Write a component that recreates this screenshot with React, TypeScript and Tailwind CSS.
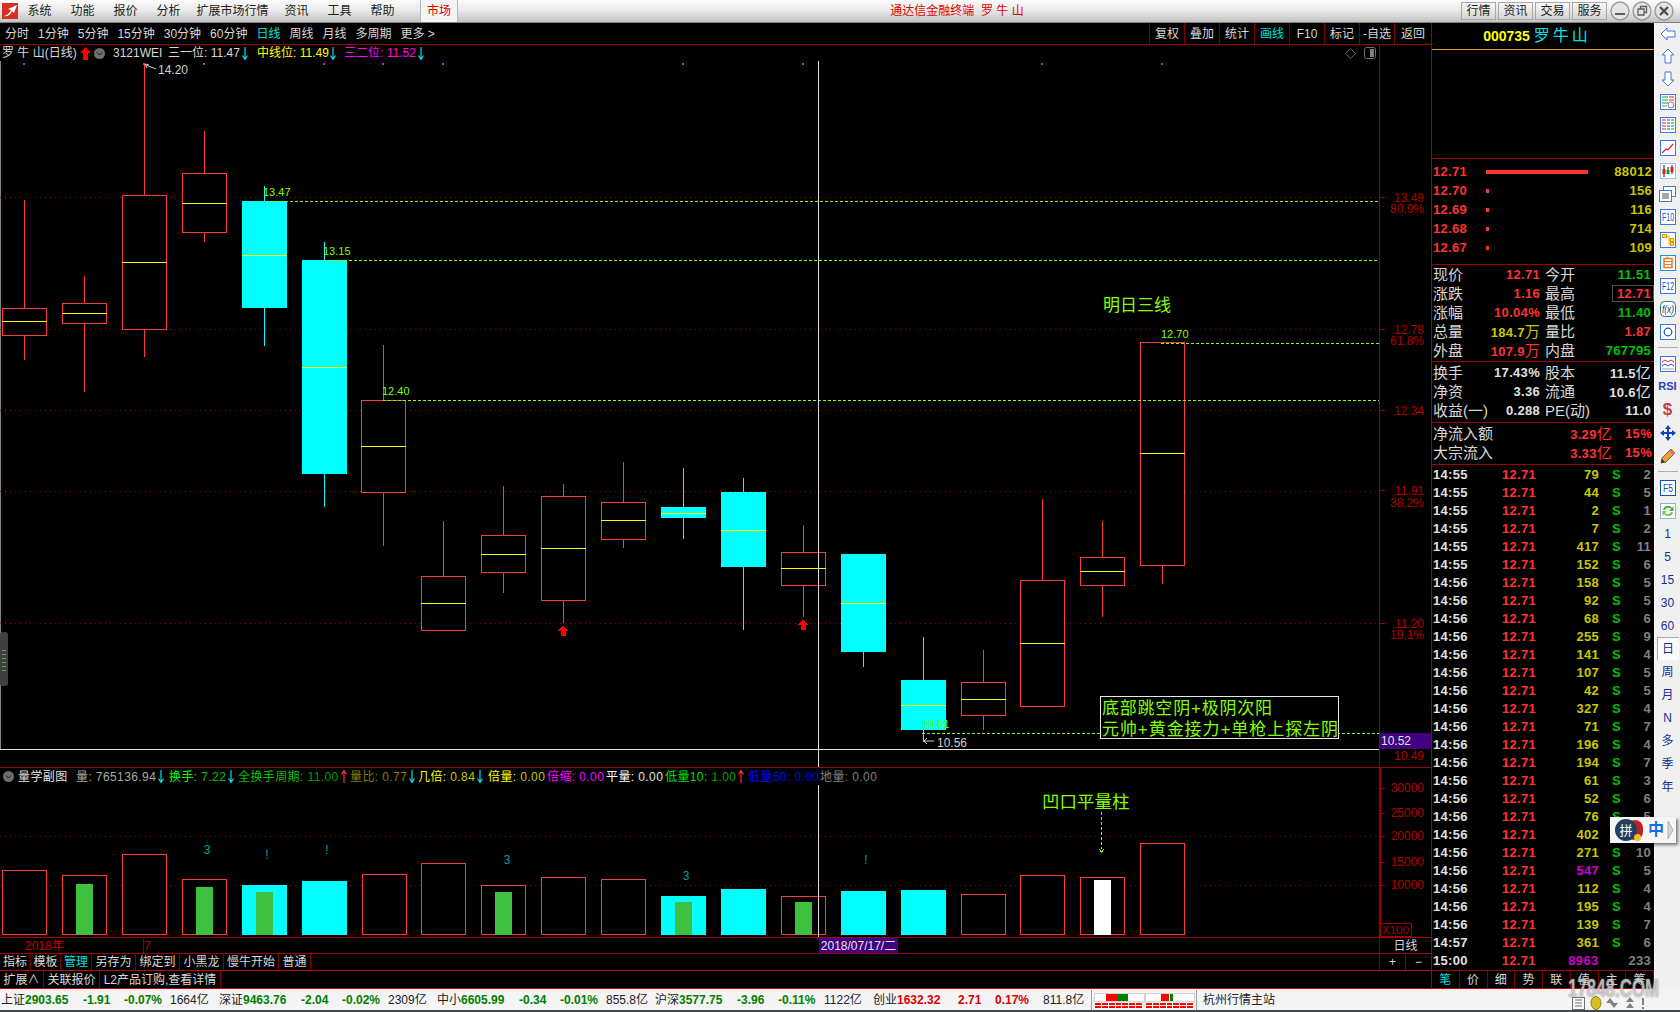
import type { ReactNode } from "react";

const RED = "#ff3c3c";
const LIME = "#80ff00";
const AXIS = "#b00000";

// x, top, bottom, mid, wickTop, wickBottom, cyan
const candles: [number, number, number, number, number, number, boolean][] = [
  [2, 308, 335, 321, 200, 360, false],
  [62, 303, 323, 313, 276, 392, false],
  [122, 195, 329, 262, 64, 357, false],
  [182, 173, 232, 203, 131, 242, false],
  [242, 201, 308, 255, 186, 346, true],
  [302, 260, 474, 367, 242, 507, true],
  [361, 400, 492, 446, 345, 546, false],
  [421, 576, 630, 603, 521, 630, false],
  [481, 535, 572, 554, 486, 593, false],
  [541, 496, 600, 548, 484, 623, false],
  [601, 502, 539, 520, 462, 548, false],
  [661, 507, 518, 513, 468, 539, true],
  [721, 492, 567, 530, 478, 630, true],
  [781, 552, 585, 568, 525, 617, false],
  [841, 554, 652, 603, 554, 667, true],
  [901, 680, 730, 705, 637, 742, true],
  [961, 682, 715, 699, 650, 730, false],
  [1020, 580, 706, 643, 499, 707, false],
  [1080, 557, 585, 571, 521, 617, false],
  [1140, 342, 565, 453, 342, 584, false],
];

// x, top, cyan, inner bar top, inner colour
const volumes: [number, number, boolean, number?, string?][] = [
  [2, 870, false],
  [62, 875, false, 884, "#40c040"],
  [122, 854, false],
  [182, 879, false, 887, "#40c040"],
  [242, 885, true, 892, "#40c040"],
  [302, 881, true],
  [362, 874, false],
  [421, 863, false],
  [481, 885, false, 892, "#40c040"],
  [541, 877, false],
  [601, 879, false],
  [661, 896, true, 902, "#40c040"],
  [721, 889, true],
  [781, 896, false, 902, "#40c040"],
  [841, 891, true],
  [901, 890, true],
  [961, 894, false],
  [1020, 875, false],
  [1080, 877, false, 880, "#ffffff"],
  [1140, 843, false],
];

const ticks: [string, number, number, boolean?][] = [
  ["14:55", 79, 2], ["14:55", 44, 5], ["14:55", 2, 1], ["14:55", 7, 2], ["14:55", 417, 11], ["14:55", 152, 6],
  ["14:56", 158, 5], ["14:56", 92, 5], ["14:56", 68, 6], ["14:56", 255, 9], ["14:56", 141, 4], ["14:56", 107, 5],
  ["14:56", 42, 5], ["14:56", 327, 4], ["14:56", 71, 7], ["14:56", 196, 4], ["14:56", 194, 7], ["14:56", 61, 3],
  ["14:56", 52, 6], ["14:56", 76, 5], ["14:56", 402, 4], ["14:56", 271, 10], ["14:56", 547, 5, true], ["14:56", 112, 4],
  ["14:56", 195, 4], ["14:56", 139, 7], ["14:57", 361, 6], ["15:00", 8963, 233, true],
];

const book: [string, string, number][] = [
  ["12.71", "88012", 102], ["12.70", "156", 3], ["12.69", "116", 3], ["12.68", "714", 3], ["12.67", "109", 3],
];

function Arrow({ className, up }: { className: string; up?: boolean }) {
  return (
    <svg width="6" height="13" viewBox="0 0 6 13" className={`shrink-0 ${className} ${up ? "rotate-180" : ""}`}>
      <path d="M3 0V12M0.5 8.5L3 12.5L5.5 8.5" fill="none" stroke="currentColor" strokeWidth="1.2" />
    </svg>
  );
}

function Frame({ children, stroke = "#3b7be0" }: { children: ReactNode; stroke?: string }) {
  return (
    <svg width="16" height="16" viewBox="0 0 16 16">
      <rect x="0.5" y="0.5" width="15" height="15" fill="#ffffff" stroke={stroke} />
      {children}
    </svg>
  );
}

function Label({ text, color = "#1050b0", length = 12 }: { text: string; color?: string; length?: number }) {
  return (
    <text x={8 - length / 2} y="12" fontSize="10.5" fill={color} textLength={length} lengthAdjust="spacingAndGlyphs">
      {text}
    </text>
  );
}

const stripIcons: ReactNode[] = [
  <svg width="16" height="14" viewBox="0 0 16 14"><path d="M1 7L7 1V4H15V10H7V13Z" fill="#fff" stroke="#3b7be0" /></svg>,
  <svg width="14" height="16" viewBox="0 0 14 16"><path d="M7 1L13 7H10V15H4V7H1Z" fill="#fff" stroke="#3b7be0" /></svg>,
  <svg width="14" height="16" viewBox="0 0 14 16"><path d="M7 15L13 9H10V1H4V9H1Z" fill="#fff" stroke="#3b7be0" /></svg>,
  <Frame><path d="M2 3H8M2 6H8M2 9H8" stroke="#00a040" /><path d="M9 3H14M9 6H14" stroke="#e02020" /><circle cx="11" cy="11" r="3" fill="none" stroke="#808080" /><path d="M2 12H7" stroke="#808080" /></Frame>,
  <Frame><path d="M2 3H6M2 6H6M2 9H6M2 12H6" stroke="#e02020" /><path d="M7 3H10M7 6H10M7 9H10M7 12H10" stroke="#2040d0" /><path d="M11 3H14M11 6H14M11 9H14M11 12H14" stroke="#00a040" /></Frame>,
  <Frame><path d="M2 13L6 9L8 10L13 4" fill="none" stroke="#e02020" strokeWidth="1.2" /></Frame>,
  <Frame stroke="#a0c0f0"><path d="M4 2V14M8 4V11M12 2V11" stroke="#101010" /><rect x="2.5" y="6" width="3" height="5" fill="#e02020" /><rect x="6.5" y="7" width="3" height="4" fill="#00a040" /><rect x="10.5" y="4" width="3" height="5" fill="#e02020" /></Frame>,
  <svg width="17" height="16" viewBox="0 0 17 16"><rect x="4.5" y="0.5" width="12" height="10" fill="#fff" stroke="#3b7be0" /><rect x="0.5" y="4.5" width="12" height="11" fill="#fff" stroke="#3b7be0" /><path d="M3 8H10M3 10H10M3 12H10" stroke="#505050" /></svg>,
  <Frame><Label text="F10" /></Frame>,
  <Frame><path d="M6 4H9V12H11M9 8H11" fill="none" stroke="#e0a000" /><rect x="2.5" y="2.5" width="4" height="3" fill="#ffe060" stroke="#e0a000" /><rect x="10.5" y="6.5" width="3" height="3" fill="#ffe060" stroke="#e0a000" /><rect x="10.5" y="10.5" width="3" height="3" fill="#ffe060" stroke="#e0a000" /></Frame>,
  <Frame stroke="#2090e0"><rect x="4" y="3.5" width="8" height="9" fill="none" stroke="#f07820" strokeWidth="1.5" /><path d="M4 6.5H12M4 9.5H12M7 1.5L8 3.5" stroke="#f07820" strokeWidth="1.2" /></Frame>,
  <Frame><Label text="F12" /></Frame>,
  <svg width="16" height="16" viewBox="0 0 16 16"><rect x="0.5" y="0.5" width="15" height="15" rx="4" fill="#fff" stroke="#208080" /><text x="2" y="12" fontSize="10" fontStyle="italic" fill="#104080" textLength="12" lengthAdjust="spacingAndGlyphs">f(x)</text></svg>,
  <Frame><circle cx="8" cy="8" r="3.8" fill="none" stroke="#1050b0" strokeWidth="1.2" /></Frame>,
  null,
  <Frame><path d="M2 6L5 4L8 6L11 4L14 6" fill="none" stroke="#e02020" /><path d="M2 10L5 8L8 10L11 8L14 10" fill="none" stroke="#2040d0" /><path d="M2 13H14" stroke="#a0a0a0" /></Frame>,
  <span className="text-[11px] leading-none font-bold text-[#2840b8]">RSI</span>,
  <span className="text-[17px] leading-none font-bold text-[#c84040]">$</span>,
  <svg width="16" height="16" viewBox="0 0 16 16"><path d="M8 0L11 4H9V7H12V5L16 8L12 11V9H9V12H11L8 16L5 12H7V9H4V11L0 8L4 5V7H7V4H5Z" fill="#1040c0" /></svg>,
  <svg width="16" height="16" viewBox="0 0 16 16"><path d="M1 15L2 10L11 1L15 5L6 14Z" fill="#e8a040" stroke="#806030" /><path d="M11 1L15 5L13 7L9 3Z" fill="#e07070" /><path d="M1 15L2 11L5 14Z" fill="#303030" /></svg>,
  null,
  <Frame stroke="#1050c0"><Label text="F5" length={10} /></Frame>,
  <Frame stroke="#90b0e0"><path d="M3 7A5 5 0 0 1 12 5L13.5 3V8H9L11 6A3.5 3.5 0 0 0 5 7Z" fill="#40b040" /><path d="M13 9A5 5 0 0 1 4 11L2.5 13V8H7L5 10A3.5 3.5 0 0 0 11 9Z" fill="#70c840" /></Frame>,
];

const stripText = ["1", "5", "15", "30", "60", "日", "周", "月", "N", "多", "季", "年"];

function Strip() {
  return (
    <div className="w-[26px] flex flex-col items-center bg-[#f0f0f0] border-l border-[#fafafa]">
      {stripIcons.map((icon, i) =>
        icon === null ? (
          <div key={i} className="w-[20px] h-[9px] flex items-center shrink-0">
            <div className="w-full h-px bg-[#b0b0b0]" />
          </div>
        ) : (
          <div key={i} className={`w-full flex items-center justify-center shrink-0 ${i === 0 ? "h-[21px]" : "h-[23px]"}`}>
            {icon}
          </div>
        ),
      )}
      {stripText.map((t) => (
        <div
          key={t}
          className={`w-[22px] h-[23px] shrink-0 flex items-center justify-center text-[12px] text-[#103090] ${t === "日" ? "bg-[#fafafa] border-t border-l border-[#a8a8a8]" : ""}`}
        >
          {t}
        </div>
      ))}
    </div>
  );
}

function TitleBar() {
  const menu: [string, string][] = [
    ["系统", "w-[43px]"], ["功能", "w-[43px]"], ["报价", "w-[43px]"], ["分析", "w-[43px]"],
    ["扩展市场行情", "w-[85px]"], ["资讯", "w-[43px]"], ["工具", "w-[43px]"], ["帮助", "w-[43px]"],
  ];
  return (
    <div className="h-[23px] shrink-0 flex items-center bg-linear-to-b from-[#fcfcfc] via-[#e8e8e8] to-[#c2c2c2] border-b border-[#808080] text-[12px] text-[#222222]">
      <svg width="16" height="16" viewBox="0 0 16 16" className="ml-[2px] shrink-0">
        <rect width="16" height="16" fill="#d83020" />
        <path d="M2 13C6 12 8 9 9 7L6 6L15 2L12 10L10 8C9 11 6 14 2 13Z" fill="#ffffff" />
      </svg>
      {menu.map(([t, w]) => (
        <div key={t} className={`${w} text-center`}>{t}</div>
      ))}
      <div className="ml-[16px] w-[38px] h-full flex items-center justify-center border-x border-[#b8b8b8] bg-[#f4f4f4] text-[#e00000]">市场</div>
      <div className="flex-1 pr-[5px] text-center text-[#e00000]">通达信金融终端&nbsp; 罗 牛 山</div>
      <div className="flex gap-[2px]">
        {["行情", "资讯", "交易", "服务"].map((t) => (
          <div key={t} className="w-[35px] h-[18px] flex items-center justify-center border border-[#a8a8a8] bg-linear-to-b from-[#f8f8f8] to-[#d4d4d4]">{t}</div>
        ))}
      </div>
      <div className="ml-[3px] mr-[6px] flex gap-[2px]">
        {[
          <path d="M5 13H15" stroke="#606060" strokeWidth="2" />,
          <path d="M6 8H12V14H6ZM8.5 8V5.5H14.5V11.5H12" fill="none" stroke="#606060" strokeWidth="1.3" />,
          <path d="M6 6L14 14M14 6L6 14" stroke="#505050" strokeWidth="2.4" />,
        ].map((glyph, i) => (
          <svg key={i} width="20" height="20" viewBox="0 0 20 20">
            <circle cx="10" cy="10" r="9" fill="#e4e4e4" stroke="#989898" strokeWidth="1.4" />
            {glyph}
          </svg>
        ))}
      </div>
    </div>
  );
}

function Toolbar() {
  const left = ["分时", "1分钟", "5分钟", "15分钟", "30分钟", "60分钟", "日线", "周线", "月线", "多周期", "更多 >"];
  const right = ["复权", "叠加", "统计", "画线", "F10", "标记", "-自选", "返回"];
  return (
    <div className="h-[22px] shrink-0 flex items-center border-b border-[#a00000] text-[12px] text-[#d8d8d8]">
      <div className="flex gap-[9px] pl-[5px]">
        {left.map((t) => (
          <span key={t} className={t === "日线" ? "text-[#00e0e0]" : ""}>{t}</span>
        ))}
      </div>
      <div className="ml-auto flex h-full">
        {right.map((t, i) => (
          <div key={t} className={`${i === 7 ? "w-[37px]" : "w-[35px]"} flex items-center justify-center border-l border-[#800000] ${t === "画线" ? "text-[#00e0e0]" : ""}`}>
            {t}
          </div>
        ))}
      </div>
    </div>
  );
}

function InfoRow() {
  return (
    <div className="h-[16px] shrink-0 flex items-center text-[12px] leading-none text-[#d8d8d8]">
      <span className="w-[80px] pl-[2px] shrink-0">罗 牛 山(日线)</span>
      <svg width="11" height="13" viewBox="0 0 11 13" className="shrink-0"><path d="M5.5 0L11 6H8V13H3V6H0Z" fill="#ff0000" /></svg>
      <svg width="11" height="11" viewBox="0 0 11 11" className="ml-[3px] shrink-0"><circle cx="5.5" cy="5.5" r="5.5" fill="#707070" /><path d="M3 4.5L5.5 7L8 4.5" fill="none" stroke="#101010" /></svg>
      <span className="w-[55px] ml-[8px] shrink-0">3121WEI</span>
      <span className="w-[74px] shrink-0">三一位: 11.47</span>
      <Arrow className="text-[#00e0e0]" />
      <span className="w-[73px] ml-[9px] shrink-0 text-[#ffff00]">中线位: 11.49</span>
      <Arrow className="text-[#00e0e0]" />
      <span className="w-[74px] ml-[8px] shrink-0 text-[#ff00ff]">三二位: 11.52</span>
      <Arrow className="text-[#00e0e0]" />
      <div className="flex-1" />
      <svg width="11" height="11" viewBox="0 0 11 11" className="mr-[8px]"><path d="M5.5 0.5L10.5 5.5L5.5 10.5L0.5 5.5Z" fill="none" stroke="#606060" /></svg>
      <svg width="12" height="12" viewBox="0 0 12 12" className="mr-[3px]"><rect x="0.5" y="0.5" width="11" height="11" rx="2" fill="none" stroke="#707070" /><rect x="6" y="2" width="4" height="8" fill="#808080" /></svg>
      <div className="w-[52px] h-full border-l border-[#900000]" />
    </div>
  );
}

function Mark({ x, y, children, color = LIME, size = 11 }: { x: number; y: number; children: ReactNode; color?: string; size?: number }) {
  return (
    <text x={x} y={y} fontSize={size} fill={color} dominantBaseline="central">
      {children}
    </text>
  );
}

function PriceChart() {
  const levels = [197, 329.5, 410, 491, 623];
  const dashes: [number, number][] = [[270, 201], [324, 260], [383, 400], [1161, 343], [922, 733]];
  const axis: [string, number][] = [
    ["13.49", 198], ["80.9%", 209], ["12.78", 330], ["61.8%", 341], ["12.34", 411],
    ["11.91", 491], ["38.2%", 503], ["11.20", 624], ["19.1%", 635], ["10.49", 756],
  ];
  const dots = [24, 144, 204, 324, 383, 443, 683, 803, 1042, 1162];
  return (
    <svg width="1431" height="706" viewBox="0 61 1431 706" className="block shrink-0" shapeRendering="crispEdges">
      <line x1="0.5" y1="61" x2="0.5" y2="750" stroke="#808080" />
      {levels.map((y) => (
        <line key={y} x1="0" y1={Math.floor(y) + 0.5} x2="1379" y2={Math.floor(y) + 0.5} stroke="#a00000" strokeDasharray="1 4" />
      ))}
      {dots.map((x) => (
        <rect key={x} x={x - 1} y={63} width="2" height="2" fill="#ff00ff" />
      ))}
      {candles.map(([x, top, bottom, mid, wt, wb, cyan]) => (
        <g key={x}>
          <line x1={x + 22.5} y1={wt} x2={x + 22.5} y2={wb} stroke={cyan ? "#00ffff" : RED} />
          {cyan ? (
            <rect x={x} y={top} width="45" height={bottom - top} fill="#00ffff" />
          ) : (
            <rect x={x + 0.5} y={top + 0.5} width="44" height={bottom - top} fill="#000000" stroke={RED} />
          )}
          <line x1={x} y1={mid + 0.5} x2={x + 45} y2={mid + 0.5} stroke="#ffff00" />
        </g>
      ))}
      {dashes.map(([x, y]) => (
        <line key={y} x1={x} y1={y + 0.5} x2="1379" y2={y + 0.5} stroke={LIME} strokeDasharray="3 2" />
      ))}
      <path d="M563 625L568 631H565.5V636H560.5V631H558Z" fill="#ff0000" />
      <path d="M803 619L808 625H805.5V630H800.5V625H798Z" fill="#ff0000" />
      <line x1="818.5" y1="61" x2="818.5" y2="767" stroke="#e0e0e0" />
      <line x1="0" y1="749.5" x2="1379" y2="749.5" stroke="#e0e0e0" />
      <line x1="1379.5" y1="61" x2="1379.5" y2="767" stroke="#900000" />
      {[198, 330, 411, 491, 624].map((y) => (
        <line key={y} x1="1380" y1={y - 0.5} x2="1385" y2={y - 0.5} stroke="#a00000" />
      ))}
      <g shapeRendering="auto">
        {axis.map(([t, y]) => (
          <text key={t} x="1424" y={y} textAnchor="end" fontSize="12" fill={AXIS} dominantBaseline="central">{t}</text>
        ))}
        <path d="M145 64L149 65M145 64L147 68M146 65L156 69" fill="none" stroke="#d0d0d0" />
        <Mark x={158} y={70} color="#d0d0d0" size={12}>14.20</Mark>
        <Mark x={263} y={192}>13.47</Mark>
        <Mark x={323} y={251}>13.15</Mark>
        <Mark x={382} y={391}>12.40</Mark>
        <Mark x={1161} y={334}>12.70</Mark>
        <Mark x={1103} y={305} size={17}>明日三线</Mark>
        <Mark x={922} y={724}>10.61</Mark>
        <path d="M934 741H924M927 738L924 741L927 744" fill="none" stroke="#d0d0d0" />
        <Mark x={937} y={743} color="#d0d0d0" size={12}>10.56</Mark>
      </g>
      <rect x="1100.5" y="696.5" width="238" height="42" fill="#000000" stroke="#e8e8e8" />
      <g shapeRendering="auto">
        <text x="1102" y="708" fontSize="17" fill={LIME} dominantBaseline="central" textLength={170}>底部跳空阴+极阴次阳</text>
        <text x="1102" y="729" fontSize="17" fill={LIME} dominantBaseline="central" textLength={236}>元帅+黄金接力+单枪上探左阴</text>
      </g>
      <rect x="1380" y="733" width="51" height="16" fill="#400080" />
      <g shapeRendering="auto">
        <text x="1381" y="741" fontSize="12" fill="#e0e0e0" dominantBaseline="central">10.52</text>
        <rect x="0" y="632" width="8" height="54" rx="3" fill="#404040" />
      </g>
      <path d="M2 650H6M2 654H6M2 658H6M2 662H6M2 666H6M2 670H6" stroke="#60a060" />
    </svg>
  );
}

const volHeader: { label: string; value?: string; lc: string; vc?: string; w: string; arrow?: string; up?: boolean }[] = [
  { label: "量学副图", lc: "text-[#e0e0e0]", w: "w-[58px]" },
  { label: "量:", value: " 765136.94", lc: "text-[#a8a8a8]", vc: "text-[#a8a8a8]", w: "w-[93px]", arrow: "text-[#00e0e0]" },
  { label: "换手:", value: " 7.22", lc: "text-[#00ff00]", vc: "text-[#00c000]", w: "w-[69px]", arrow: "text-[#00e0e0]" },
  { label: "全换手周期:", value: " 11.00", lc: "text-[#00c000]", vc: "text-[#00a000]", w: "w-[112px]", arrow: "text-[#ff3030]", up: true },
  { label: "量比:", value: " 0.77", lc: "text-[#808000]", vc: "text-[#808000]", w: "w-[68px]", arrow: "text-[#00e0e0]" },
  { label: "几倍:", value: " 0.84", lc: "text-[#ffff00]", vc: "text-[#c8c800]", w: "w-[70px]", arrow: "text-[#00e0e0]" },
  { label: "倍量:", value: " 0.00", lc: "text-[#ffff00]", vc: "text-[#c8c800]", w: "w-[59px]" },
  { label: "倍缩:", value: " 0.00", lc: "text-[#ff00ff]", vc: "text-[#ff00ff]", w: "w-[59px]" },
  { label: "平量:", value: " 0.00", lc: "text-[#ffffff]", vc: "text-[#e0e0e0]", w: "w-[59px]" },
  { label: "低量10:", value: " 1.00", lc: "text-[#00e000]", vc: "text-[#00a000]", w: "w-[83px]", arrow: "text-[#ff3030]", up: true },
  { label: "低量50:", value: " 0.00", lc: "text-[#0000ff]", vc: "text-[#0000e0]", w: "w-[72px]" },
  { label: "地量:", value: " 0.00", lc: "text-[#808080]", vc: "text-[#808080]", w: "w-[60px]" },
];

function VolumeHeader() {
  return (
    <div className="h-[18px] shrink-0 flex items-center border-t border-[#a00000] text-[12px] leading-none whitespace-pre tracking-[0.4px]">
      <svg width="11" height="11" viewBox="0 0 11 11" className="ml-[3px] mr-[4px] shrink-0"><circle cx="5.5" cy="5.5" r="5.5" fill="#707070" /><path d="M3 4.5L5.5 7L8 4.5" fill="none" stroke="#101010" /></svg>
      {volHeader.map((item) => (
        <div key={item.label} className={`${item.w} shrink-0 flex items-center gap-[2px]`}>
          <span className={item.lc}>{item.label}</span>
          {item.value && <span className={`${item.vc} -ml-[2px]`}>{item.value}</span>}
          {item.arrow && <Arrow className={item.arrow} up={item.up} />}
        </div>
      ))}
      <div className="flex-1" />
      <div className="w-[52px] h-full border-l-2 border-[#a00000]" />
    </div>
  );
}

function VolumeChart() {
  const marks: [string, number, number][] = [["3", 207, 850], ["!", 267, 855], ["!", 327, 850], ["3", 507, 860], ["3", 686, 876], ["!", 866, 860]];
  const axis: [string, number][] = [["30000", 788], ["25000", 813], ["20000", 836], ["15000", 862], ["10000", 885]];
  return (
    <svg width="1431" height="152" viewBox="0 785 1431 152" className="block shrink-0 overflow-visible" shapeRendering="crispEdges">
      {[836, 885].map((y) => (
        <line key={y} x1="0" y1={y + 0.5} x2="1379" y2={y + 0.5} stroke="#a00000" strokeDasharray="1 4" />
      ))}
      {volumes.map(([x, top, cyan, innerTop, innerColor]) => (
        <g key={x}>
          {cyan ? (
            <rect x={x} y={top} width="45" height={935 - top} fill="#00ffff" />
          ) : (
            <rect x={x + 0.5} y={top + 0.5} width="44" height={934 - top} fill="#000000" stroke={RED} />
          )}
          {innerTop && <rect x={x + 14} y={innerTop} width="17" height={935 - innerTop} fill={innerColor} />}
        </g>
      ))}
      <line x1="818.5" y1="785" x2="818.5" y2="937" stroke="#e0e0e0" />
      <line x1="1101.5" y1="812" x2="1101.5" y2="849" stroke={LIME} strokeDasharray="3 2" />
      <path d="M1099 849L1101.5 852L1104 849" fill="none" stroke={LIME} />
      <line x1="1380" y1="785" x2="1380" y2="937" stroke="#a00000" strokeWidth="2" />
      {axis.map(([t, y]) => (
        <line key={t} x1="1381" y1={y + 0.5} x2="1385" y2={y + 0.5} stroke="#a00000" />
      ))}
      <rect x="1380.5" y="923.5" width="31" height="13" fill="none" stroke="#a00000" />
      <g shapeRendering="auto">
        {marks.map(([t, x, y]) => (
          <text key={x} x={x} y={y} textAnchor="middle" fontSize="12" fill="#00a0a0" dominantBaseline="central">{t}</text>
        ))}
        {axis.map(([t, y]) => (
          <text key={t} x="1424" y={y} textAnchor="end" fontSize="12" fill={AXIS} dominantBaseline="central">{t}</text>
        ))}
        <text x="1382" y="930" fontSize="11.5" fill={AXIS} dominantBaseline="central">X100</text>
        <text x="1042" y="802" fontSize="17.5" fill={LIME} dominantBaseline="central">凹口平量柱</text>
      </g>
    </svg>
  );
}

function LeftColumn() {
  const tabs: [string, string][] = [
    ["指标", "w-[31px]"], ["模板", "w-[30px]"], ["管理", "w-[31px]"], ["另存为", "w-[44px]"],
    ["绑定到", "w-[44px]"], ["小黑龙", "w-[44px]"], ["慢牛开始", "w-[55px]"], ["普通", "w-[32px]"],
  ];
  const links: [string, string][] = [["扩展∧", "w-[44px]"], ["关联报价", "w-[56px]"], ["L2产品订购,查看详情", "w-[121px]"]];
  return (
    <div className="w-[1432px] shrink-0 flex flex-col border-r border-[#a00000]">
      <Toolbar />
      <InfoRow />
      <PriceChart />
      <VolumeHeader />
      <VolumeChart />
      <div className="h-[16px] shrink-0 flex items-stretch border-t border-[#a00000] text-[12px] leading-none">
        <div className="w-[144px] pl-[25px] flex items-center border-r border-[#800000] text-[#c00000]">2018年</div>
        <div className="w-[675px] flex items-center text-[#c00000]">7</div>
        <div className="w-[79px] flex items-center justify-center bg-[#400080] text-[#e8e8e8]">2018/07/17/二</div>
        <div className="flex-1" />
        <div className="w-[52px] flex items-center justify-center border-l border-[#800000] text-[#d8d8d8]">日线</div>
      </div>
      <div className="h-[17px] shrink-0 flex items-stretch border-t border-[#a00000] text-[12px] leading-none text-[#d8d8d8]">
        {tabs.map(([t, w]) => (
          <div key={t} className={`${w} flex items-center justify-center border-r border-[#800000] ${t === "管理" ? "text-[#00e0e0]" : ""}`}>{t}</div>
        ))}
        <div className="flex-1" />
        <div className="w-[26px] flex items-center justify-center border-l border-[#800000]">+</div>
        <div className="w-[26px] flex items-center justify-center border-l border-[#800000]">−</div>
      </div>
      <div className="h-[19px] shrink-0 flex items-stretch border-y border-[#c80000] text-[12px] leading-none text-[#d8d8d8]">
        {links.map(([t, w]) => (
          <div key={t} className={`${w} flex items-center justify-center border-r border-[#800000]`}>{t}</div>
        ))}
      </div>
    </div>
  );
}

const num = "font-bold text-[13px] tracking-[0.3px]";

function StatValue({ v, unit, className }: { v: string; unit?: string; className: string }) {
  return (
    <span className={`${num} ${className}`}>
      {v}
      {unit && <span className="font-normal text-[15px]">{unit}</span>}
    </span>
  );
}

function StatRow({ l1, v1, l2, v2 }: { l1: string; v1: ReactNode; l2: string; v2: ReactNode }) {
  return (
    <div className="h-[19px] flex items-center pl-px pr-[3px] text-[15px] leading-none text-[#d8d8d8]">
      <div className="w-[107px] flex items-center justify-between">
        <span>{l1}</span>
        {v1}
      </div>
      <div className="flex-1 ml-[5px] flex items-center justify-between">
        <span>{l2}</span>
        {v2}
      </div>
    </div>
  );
}

function RightPanel() {
  const R = "text-[#ff3232]";
  const G = "text-[#00c000]";
  const W = "text-[#e0e0e0]";
  const Y = "text-[#c8c800]";
  return (
    <div className="w-[222px] shrink-0 flex flex-col">
      <div className="h-[27px] shrink-0 flex items-center justify-center gap-[4px] pr-[12px] border-b border-[#e0a030] leading-none">
        <span className="font-bold text-[14px] text-[#ffff00]">000735</span>
        <span className="text-[16px] text-[#00e0e0] tracking-[3px]">罗牛山</span>
      </div>
      <div className="h-[109px] shrink-0 border-b border-[#a00000]" />
      <div className="h-[106px] shrink-0 pt-[3px] border-b border-[#a00000]">
        {book.map(([p, v, w]) => (
          <div key={p} className={`h-[19px] flex items-center pl-px pr-[2px] leading-none ${num}`}>
            <span className={`w-[53px] ${R}`}>{p}</span>
            <div className="flex-1">
              <div className="h-[4px] bg-[#ff3232]" style={{ width: w }} />
            </div>
            <span className={Y}>{v}</span>
          </div>
        ))}
      </div>
      <div className="h-[97px] shrink-0 border-b border-[#a00000]">
        <StatRow l1="现价" v1={<StatValue v="12.71" className={R} />} l2="今开" v2={<StatValue v="11.51" className={G} />} />
        <StatRow l1="涨跌" v1={<StatValue v="1.16" className={R} />} l2="最高" v2={<span className={`${num} ${R} border border-[#505050] -mr-[3px] pl-[4px] pr-[2px] py-px`}>12.71</span>} />
        <StatRow l1="涨幅" v1={<StatValue v="10.04%" className={R} />} l2="最低" v2={<StatValue v="11.40" className={G} />} />
        <StatRow l1="总量" v1={<StatValue v="184.7" unit="万" className={Y} />} l2="量比" v2={<StatValue v="1.87" className={R} />} />
        <StatRow l1="外盘" v1={<StatValue v="107.9" unit="万" className={R} />} l2="内盘" v2={<StatValue v="767795" className={G} />} />
      </div>
      <div className="h-[61px] shrink-0 pt-px border-b border-[#a00000]">
        <StatRow l1="换手" v1={<StatValue v="17.43%" className={W} />} l2="股本" v2={<StatValue v="11.5" unit="亿" className={W} />} />
        <StatRow l1="净资" v1={<StatValue v="3.36" className={W} />} l2="流通" v2={<StatValue v="10.6" unit="亿" className={W} />} />
        <StatRow l1="收益(一)" v1={<StatValue v="0.288" className={W} />} l2="PE(动)" v2={<StatValue v="11.0" className={W} />} />
      </div>
      <div className="h-[42px] shrink-0 pt-px border-b border-[#a00000]">
        {[["净流入额", "3.29"], ["大宗流入", "3.33"]].map(([l, v]) => (
          <div key={l} className="h-[19px] flex items-center pl-px pr-[2px] text-[15px] leading-none text-[#d8d8d8]">
            <span className="flex-1">{l}</span>
            <StatValue v={v} unit="亿" className={R} />
            <span className={`w-[40px] text-right ${num} ${R}`}>15%</span>
          </div>
        ))}
      </div>
      <div className="h-[506px] shrink-0 border-b border-[#a00000]">
        {ticks.map(([time, vol, count, hot], i) => (
          <div key={i} className={`h-[18px] flex items-center pl-px pr-[3px] leading-none ${num}`}>
            <span className={`w-[69px] ${W}`}>{time}</span>
            <span className={`w-[40px] ${R}`}>12.71</span>
            <span className={`w-[57px] text-right ${hot ? "text-[#d000d0]" : Y}`}>{vol}</span>
            <span className="w-[30px] pl-[13px] text-[#00c000]">{i === 27 ? "" : "S"}</span>
            <span className="flex-1 text-right text-[#808080]">{count}</span>
          </div>
        ))}
      </div>
      <div className="h-[18px] shrink-0 flex border-b border-[#c80000] text-[12px] leading-none text-[#d8d8d8]">
        {["笔", "价", "细", "势", "联", "值", "主", "筹"].map((t) => (
          <div key={t} className={`w-[27.75px] flex items-center justify-center border-r border-[#800000] ${t === "笔" ? "text-[#00e0e0]" : ""}`}>{t}</div>
        ))}
      </div>
    </div>
  );
}

const indexes: { name: string; value: string; chg: string; pct: string; amt: string; up?: boolean }[] = [
  { name: "上证", value: "2903.65", chg: "-1.91", pct: "-0.07%", amt: "1664亿" },
  { name: "深证", value: "9463.76", chg: "-2.04", pct: "-0.02%", amt: "2309亿" },
  { name: "中小", value: "6605.99", chg: "-0.34", pct: "-0.01%", amt: "855.8亿" },
  { name: "沪深", value: "3577.75", chg: "-3.96", pct: "-0.11%", amt: "1122亿" },
  { name: "创业", value: "1632.32", chg: "2.71", pct: "0.17%", amt: "811.8亿", up: true },
];

function StatusBar() {
  return (
    <div className="h-[23px] shrink-0 flex flex-col bg-[#f4f4f4]">
      <div className="flex-1 flex items-center text-[12px] leading-none text-[#222222] whitespace-nowrap">
        <div className="flex pl-px">
          {indexes.map((ix) => {
            const c = ix.up ? "text-[#d80000]" : "text-[#008000]";
            return (
              <div key={ix.name} className="flex items-center">
                <span className={ix.up ? "w-[85px]" : "w-[82px]"}>
                  {ix.name}
                  <b className={c}>{ix.value}</b>
                </span>
                <b className={`${ix.up ? "w-[37px]" : "w-[41px]"} ${c}`}>{ix.chg}</b>
                <b className={`${ix.up ? "w-[48px]" : "w-[46px]"} ${c}`}>{ix.pct}</b>
                <span className="w-[49px]">{ix.amt}</span>
              </div>
            );
          })}
        </div>
        <svg width="106" height="20" viewBox="0 0 106 20" className="-ml-px shrink-0 border-x border-[#a0a0a0]" shapeRendering="crispEdges">
          <rect x="2.5" y="3.5" width="51" height="8" fill="#ffffff" stroke="#d0d0d0" />
          <rect x="54.5" y="3.5" width="50" height="8" fill="#ffffff" stroke="#d0d0d0" />
          <rect x="14" y="4" width="12" height="7" fill="#ff0000" />
          <rect x="27" y="4" width="10" height="7" fill="#008000" />
          <rect x="70" y="4" width="8" height="7" fill="#ff0000" />
          <rect x="79" y="4" width="4" height="7" fill="#008000" />
          <path d="M3 14H52M55 14H104" stroke="#ff0000" strokeWidth="2" strokeDasharray="6 1" />
          <path d="M3 17H52M55 17H104" stroke="#ff0000" strokeWidth="2" strokeDasharray="6 1" />
        </svg>
        <span className="ml-[6px]">杭州行情主站</span>
        <svg width="80" height="14" viewBox="0 0 80 14" className="ml-auto mr-[28px] shrink-0 mt-[6px]">
          <rect x="0.5" y="1.5" width="12" height="12" fill="#fafafa" stroke="#707070" />
          <path d="M3 4H10M3 7H10M3 10H10" stroke="#707070" />
          <ellipse cx="24" cy="7" rx="5" ry="6.5" fill="#d8c020" stroke="#908010" />
          <path d="M38 2L42 7H34ZM42 12L38 7H46Z" fill="#808080" />
          <path d="M58 1L62 6H54ZM58 7L62 12H54Z" fill="#808080" />
          <rect x="70" y="2" width="2" height="7" fill="#808080" />
          <rect x="70" y="11" width="2" height="2" fill="#808080" />
        </svg>
      </div>
      <div className="h-[2px] bg-[#40484c]" />
    </div>
  );
}

export default function App() {
  return (
    <div className="relative w-[1680px] h-[1012px] overflow-hidden flex flex-col bg-black font-['Liberation_Sans','Noto_Sans_CJK_SC',sans-serif]">
      <TitleBar />
      <div className="h-[966px] shrink-0 flex">
        <LeftColumn />
        <RightPanel />
        <Strip />
      </div>
      <StatusBar />

      {/* input method floater */}
      <div className="absolute left-[1610px] top-[817px] w-[66px] h-[26px] flex items-center bg-[#f6f6f6] shadow-[2px_2px_3px_rgba(0,0,0,0.5)]">
        <div className="relative ml-[5px] w-[28px] h-[22px] shrink-0">
          <div className="absolute right-0 top-px w-[16px] h-[20px] rounded-full bg-[#c02020]" />
          <div className="absolute left-0 top-0 w-[22px] h-[22px] rounded-full bg-[#204060] flex items-center justify-center text-[13px] leading-none text-white">拼</div>
          <div className="absolute right-[2px] bottom-0 w-[7px] h-[7px] rounded-full bg-[#f0c020]" />
        </div>
        <span className="ml-[5px] text-[16px] leading-none font-bold text-[#1070e0]">中</span>
        <svg width="7" height="20" viewBox="0 0 7 20" className="ml-auto mr-[2px]"><path d="M1 1L6 10L1 19Z" fill="#d8d8d8" stroke="#b0b0b0" /></svg>
      </div>

      {/* site watermark */}
      <div className="absolute left-[1568px] top-[975px] origin-left scale-x-[0.65] text-[26px] leading-none font-bold text-white/50 [text-shadow:0_0_2px_#808080]">
        17848.COM
      </div>
    </div>
  );
}
